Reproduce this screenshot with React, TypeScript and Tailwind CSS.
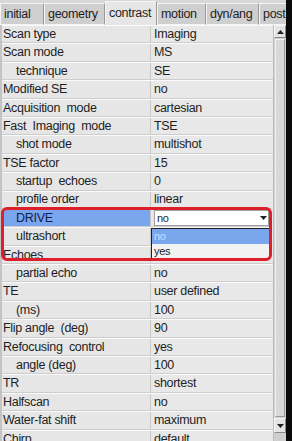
import React from 'react';

const tabs = [
  { label: 'initial', w: 'w-[44px]' },
  { label: 'geometry', w: 'w-[61px]' },
  { label: 'contrast', w: 'w-[52px]', active: true },
  { label: 'motion', w: 'w-[49px]' },
  { label: 'dyn/ang', w: 'w-[53px]' },
  { label: 'postp', w: 'w-[40px]' },
];

const rows: { label: string; value: string; indent?: boolean }[] = [
  { label: 'Scan type', value: 'Imaging' },
  { label: 'Scan mode', value: 'MS' },
  { label: 'technique', value: 'SE', indent: true },
  { label: 'Modified SE', value: 'no' },
  { label: 'Acquisition  mode', value: 'cartesian' },
  { label: 'Fast  Imaging  mode', value: 'TSE' },
  { label: 'shot mode', value: 'multishot', indent: true },
  { label: 'TSE factor', value: '15' },
  { label: 'startup  echoes', value: '0', indent: true },
  { label: 'profile order', value: 'linear', indent: true },
  { label: 'DRIVE', value: 'no', indent: true },
  { label: 'ultrashort', value: '', indent: true },
  { label: 'Echoes', value: '' },
  { label: 'partial echo', value: 'no', indent: true },
  { label: 'TE', value: 'user defined' },
  { label: '(ms)', value: '100', indent: true },
  { label: 'Flip angle  (deg)', value: '90' },
  { label: 'Refocusing  control', value: 'yes' },
  { label: 'angle (deg)', value: '100', indent: true },
  { label: 'TR', value: 'shortest' },
  { label: 'Halfscan', value: 'no' },
  { label: 'Water-fat shift', value: 'maximum' },
  { label: 'Chirp', value: 'default' },
];

const font = { fontFamily: '"Liberation Sans", Arial, sans-serif' };

export default function App() {
  return (
    <div className="relative w-[292px] h-[441px] overflow-hidden bg-[#d6d6d6] flex text-[12.5px] tracking-[-0.3px] text-[#1e1e1e]" style={font}>
      <div className="w-[286px] flex flex-col">
        <div className="h-[25px] flex items-end bg-[#d8d8d8]">
          {tabs.map((t) => (
            <div
              key={t.label}
              className={`${t.w} shrink-0 px-[3px] flex items-center whitespace-nowrap overflow-hidden border-t border-l border-t-[#f4f4f4] border-l-[#f4f4f4] border-r border-r-[#9a9a9a] ${t.active ? 'h-[24px] bg-[#e6e6e6]' : 'h-[22px] bg-[#cfcfcf] border-b border-b-[#f4f4f4]'}`}
            >
              {t.label}
            </div>
          ))}
        </div>
        <div className="flex flex-1 min-h-0">
          <div className="w-[273px] flex flex-col border-l-2 border-l-[#c4c4c4]">
            {rows.map((r, i) => {
              const drive = r.label === 'DRIVE';
              return (
                <div key={i} className="h-[18.4px] shrink-0 flex border-t border-t-[#fafafa] border-b border-b-[#cdcdcd]">
                  <div className={`w-[148px] shrink-0 flex items-center whitespace-pre leading-none ${r.indent ? 'pl-[14px]' : 'pl-[1px]'} ${drive ? 'bg-[#7aa6ee] text-[#10204a]' : 'bg-[#e6e6e6]'}`}>
                    {r.label}
                  </div>
                  <div className="flex-1 flex items-center bg-[#e8e8e8] border-l border-l-[#c8c8c8] pl-[3px] leading-none whitespace-nowrap">
                    {drive ? (
                      <div className="flex-1 h-[16px] mr-[4px] bg-white border border-[#a0a0a0] flex items-center justify-between pl-[2px] text-[11px]">
                        <span>no</span>
                        <span className="w-[10px] h-full flex items-center justify-center">
                          <svg width="7" height="4" viewBox="0 0 7 4"><path d="M0 0h7L3.5 4z" fill="#222" /></svg>
                        </span>
                      </div>
                    ) : (
                      r.value
                    )}
                  </div>
                </div>
              );
            })}
          </div>
          <div className="w-[13px] flex flex-col bg-[#cfcfcf] border-l border-l-[#bcbcbc]">
            <div className="h-[13px] bg-[#e4e4e4] border border-[#f8f8f8] border-r-[#8a8a8a] border-b-[#8a8a8a] flex items-center justify-center">
              <svg width="7" height="4" viewBox="0 0 7 4"><path d="M3.5 0L7 4H0z" fill="#222" /></svg>
            </div>
            <div className="flex-1 m-[1px] bg-[#d8d8d8] border border-[#f2f2f2] border-r-[#9a9a9a] border-b-[#9a9a9a]" />
            <div className="h-[15px] mb-[8px] bg-[#e4e4e4] border border-[#f8f8f8] border-r-[#8a8a8a] border-b-[#8a8a8a] flex items-center justify-center">
              <svg width="7" height="4" viewBox="0 0 7 4"><path d="M0 0h7L3.5 4z" fill="#222" /></svg>
            </div>
          </div>
        </div>
      </div>
      <div className="w-[6px] bg-[#0a0a0a]" />

      {/* dropdown list */}
      <div className="absolute left-[151px] top-[228px] w-[118px] bg-[#f2f2f2] border-t border-l border-[#202020] text-[11px] leading-none">
        <div className="h-[15px] bg-[#7aa6ee] text-[#c8dcff] flex items-center pl-[2px]">no</div>
        <div className="h-[15px] flex items-center pl-[2px]">yes</div>
      </div>

      {/* red annotation box */}
      <div className="absolute left-[1px] top-[207px] w-[271px] h-[54px] border-[3px] border-[#dc1f2a] rounded-[6px] pointer-events-none" />
    </div>
  );
}
